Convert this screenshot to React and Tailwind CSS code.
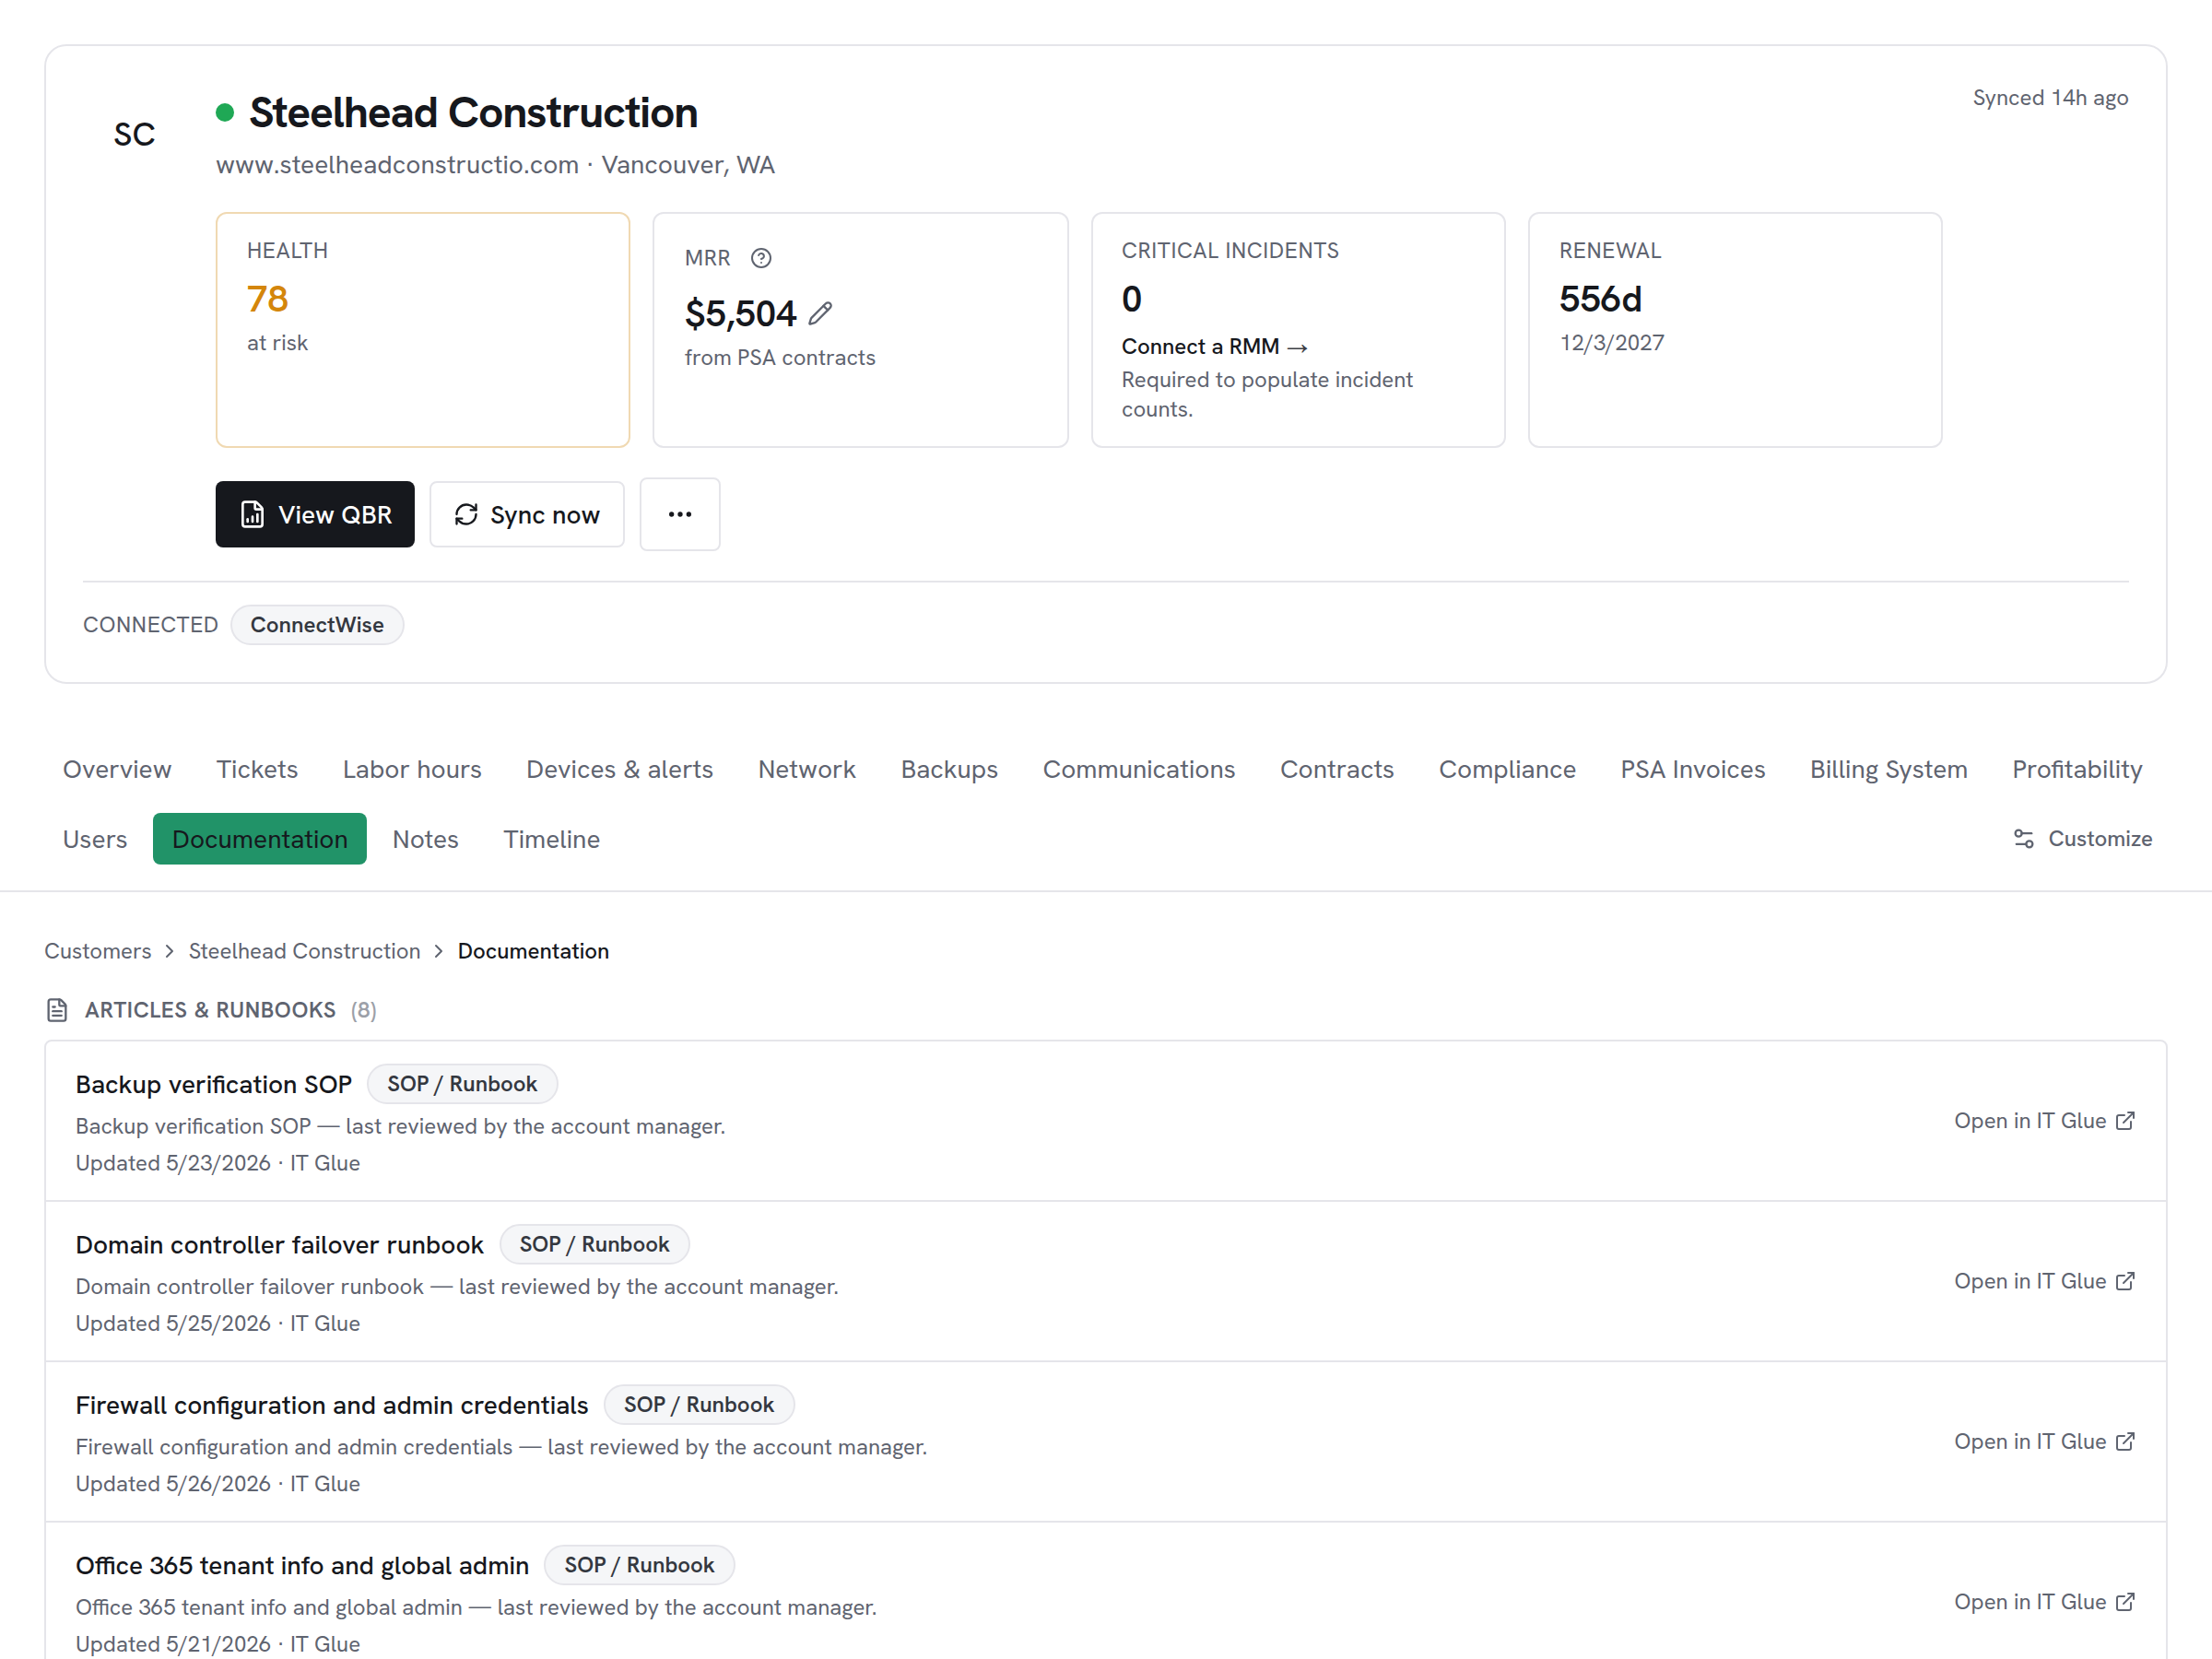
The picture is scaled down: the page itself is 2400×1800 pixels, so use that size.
import React from 'react';
import {
  ChevronRight,
  CircleQuestionMark,
  Ellipsis,
  ExternalLink,
  FileChartColumnIncreasing,
  FileText,
  Pencil,
  RefreshCw,
  Settings2,
} from 'lucide-react';

const TABS = [
  'Overview',
  'Tickets',
  'Labor hours',
  'Devices & alerts',
  'Network',
  'Backups',
  'Communications',
  'Contracts',
  'Compliance',
  'PSA Invoices',
  'Billing System',
  'Profitability',
  'Users',
  'Documentation',
  'Notes',
  'Timeline',
];

const ARTICLES = [
  { title: 'Backup verification SOP', updated: '5/23/2026' },
  { title: 'Domain controller failover runbook', updated: '5/25/2026' },
  { title: 'Firewall configuration and admin credentials', updated: '5/26/2026' },
  { title: 'Office 365 tenant info and global admin', updated: '5/21/2026' },
];

function Pill({ children }) {
  return (
    <span className="rounded-full border-2 border-[#e5e5ea] bg-[#f5f6f8] px-5 py-1 text-[24px] leading-8 font-semibold text-[#343840]">
      {children}
    </span>
  );
}

function StatCard({ label, help, value, editable, sub, warn, padding = 'px-8', children }) {
  return (
    <div className={`rounded-xl border-2 py-6 ${padding} ${warn ? 'border-[#f0d9b2]' : 'border-[#e5e5ea]'}`}>
      <div className="flex items-center gap-2 text-[24px] leading-8 tracking-[0.6px] text-[#5f6470] uppercase">
        {label}
        {help && (
          <button type="button" className="flex size-12 items-center justify-center">
            <CircleQuestionMark className="size-6" />
          </button>
        )}
      </div>
      <div className={`mt-2 flex items-center gap-[11px] text-[40px] leading-[56px] font-semibold ${warn ? 'text-[#d4860b]' : 'text-[#16181d]'}`}>
        {value}
        {editable && <Pencil className="size-7 text-[#5f6470]" />}
      </div>
      {sub && <p className="mt-1 text-[24px] leading-8 text-[#5f6470]">{sub}</p>}
      {children}
    </div>
  );
}

function CustomerHeader() {
  return (
    <section className="rounded-3xl border-2 border-[#e5e5ea] p-10">
      <div className="flex items-start gap-8">
        <div className="flex size-28 shrink-0 items-center justify-center text-[36px] font-medium">SC</div>

        <div className="min-w-0 flex-1">
          <div className="flex items-center gap-4">
            <span className="size-5 rounded-full bg-[#1fa855]" />
            <h1 className="text-[48px] leading-[64px] font-bold tracking-[-0.025em]">Steelhead Construction</h1>
          </div>
          <p className="mt-1 text-[28px] leading-10 text-[#5f6470]">www.steelheadconstructio.com · Vancouver, WA</p>

          <div className="mt-8 grid grid-cols-[450px_452px_450px_450px] gap-6">
            <StatCard label="Health" value="78" sub="at risk" warn />
            <StatCard label="MRR" value="$5,504" sub="from PSA contracts" help editable padding="pr-8 pl-[33px]" />
            <StatCard label="Critical incidents" value="0" padding="pr-8 pl-[31px]">
              <a className="mt-2 block h-8 text-[24px] leading-8 font-medium">
                Connect a RMM{' '}
                <span className="-ml-[5px] font-['Liberation_Sans'] text-[36px] leading-[0] font-normal text-[#3c3e44]">→</span>
              </a>
              <p className="mt-1 text-[24px] leading-8 text-[#5f6470]">Required to populate incident counts.</p>
            </StatCard>
            <StatCard label="Renewal" value="556d" sub="12/3/2027" />
          </div>

          <div className="mt-8 flex items-center gap-4 text-[28px] leading-10 font-medium">
            <button type="button" className="flex h-[72px] w-[216px] items-center gap-3 rounded-lg bg-[#16181d] px-6 text-white">
              <FileChartColumnIncreasing className="size-8" />
              View QBR
            </button>
            <button type="button" className="flex h-[72px] w-[212px] items-center gap-3 rounded-lg border-2 border-[#e5e5ea] px-6">
              <RefreshCw className="size-7" />
              Sync now
            </button>
            <button type="button" className="flex h-20 w-[88px] items-center justify-center rounded-lg border-2 border-[#e5e5ea]">
              <Ellipsis className="size-8" />
            </button>
          </div>
        </div>

        <span className="text-[24px] leading-8 whitespace-nowrap text-[#5f6470]">Synced 14h ago</span>
      </div>

      {/* Connected integrations */}
      <div className="mt-8 flex items-center gap-3 border-t-2 border-[#e5e5ea] pt-6">
        <span className="text-[24px] leading-8 tracking-[0.6px] text-[#5f6470] uppercase">Connected</span>
        <Pill>ConnectWise</Pill>
      </div>
    </section>
  );
}

function TabBar({ active }) {
  return (
    <nav className="flex flex-wrap items-center gap-x-2 gap-y-5 border-b-2 border-[#e5e5ea] px-12 pt-16 pb-7 text-[#5f6470]">
      {TABS.map((tab) => (
        <a
          key={tab}
          className={`rounded-lg py-2 text-[28px] leading-10 ${tab === active ? '-ml-px bg-[#219368] pr-5 pl-[21px] text-[#16181d]' : 'px-5'}`}
        >
          {tab}
        </a>
      ))}
      <button type="button" className="ml-auto flex items-center gap-[13px] px-4 text-[24px] leading-8 font-medium">
        <Settings2 className="size-7" />
        Customize
      </button>
    </nav>
  );
}

function ArticleRow({ title, updated }) {
  return (
    <li className="flex items-center justify-between px-8 py-6">
      <div>
        <div className="flex items-center gap-4">
          <span className="text-[28px] leading-10 font-medium">{title}</span>
          <Pill>SOP / Runbook</Pill>
        </div>
        <p className="mt-2 text-[24px] leading-8 text-[#5f6470]">{title} — last reviewed by the account manager.</p>
        <p className="mt-2 text-[24px] leading-8 text-[#5f6470]">Updated {updated} · IT Glue</p>
      </div>
      <a className="flex items-center gap-2 text-[24px] leading-8 text-[#5f6470]">
        Open in IT Glue
        <ExternalLink className="size-6" />
      </a>
    </li>
  );
}

export default function App() {
  return (
    <div className="h-[1800px] w-[2400px] overflow-hidden bg-white font-['Hanken_Grotesk','Inter',sans-serif] text-[#16181d]">
      <div className="px-12 pt-12">
        <CustomerHeader />
      </div>

      <TabBar active="Documentation" />

      <main className="px-12 pt-12">
        <div className="flex items-center gap-2 text-[24px] leading-8 text-[#5f6470]">
          <span>Customers</span>
          <ChevronRight className="mr-px -ml-px size-6" />
          <span>Steelhead Construction</span>
          <ChevronRight className="mr-px -ml-px size-6" />
          <span className="font-medium text-[#16181d]">Documentation</span>
        </div>

        <div className="mt-8 flex items-center gap-4 text-[24px] leading-8 tracking-[0.6px] text-[#5f6470]">
          <FileText className="size-7" />
          <h2 className="font-semibold uppercase">Articles &amp; Runbooks</h2>
          <span className="font-semibold text-[#9ca0a8]">(8)</span>
        </div>

        <ul className="mt-4 divide-y-2 divide-[#e5e5ea] rounded-lg border-2 border-[#e5e5ea]">
          {ARTICLES.map((article) => (
            <ArticleRow key={article.title} {...article} />
          ))}
        </ul>
      </main>
    </div>
  );
}
